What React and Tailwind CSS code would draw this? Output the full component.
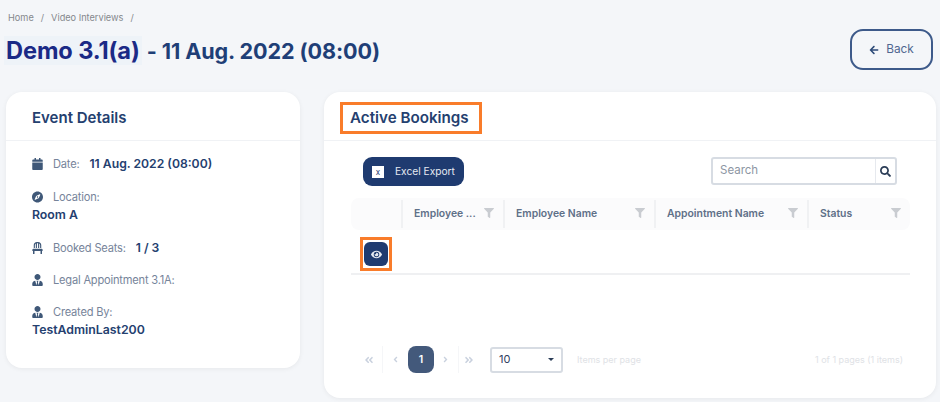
import React from 'react';
import {
    FaAngleDoubleLeft,
    FaAngleDoubleRight,
    FaAngleLeft,
    FaAngleRight,
    FaArrowLeft,
    FaCalendar,
    FaChair,
    FaCompass,
    FaEye,
    FaFilter,
    FaSearch,
    FaUserTie
} from 'react-icons/fa';

const font = { fontFamily: 'Inter, "Liberation Sans", sans-serif' };

const Detail = ({ icon: Icon, label, value, stacked, className = '' }) => (
    <div className={className}>
        <div className="flex items-center h-[20px]">
            <Icon className="w-[11px] h-[12px] text-[#3f5878] shrink-0" />
            <span className="ml-[10px] text-[11.1px] text-[#76849a] tracking-[-0.2px]">{label}</span>
            {value && !stacked && <span className="ml-[10px] text-[12.2px] font-semibold text-[#24406f]">{value}</span>}
        </div>
        {stacked && <div className="text-[12.3px] font-semibold text-[#24406f] leading-[18px] mt-[-1px]">{stacked}</div>}
    </div>
);

const HeaderCell = ({ label, width }) => (
    <div className={`flex items-center justify-between h-[28px] border-l-2 border-[#f0f1f3] pl-[11px] pr-[9px] ${width}`}>
        <span className="text-[10.4px] font-semibold text-[#5f7088] whitespace-nowrap">{label}</span>
        <FaFilter className="w-[10px] h-[10px] text-[#c9ccd1] -mt-[2px]" />
    </div>
);

const App = () => {
    return (
        <div style={font} className="w-[940px] h-[402px] overflow-hidden bg-[#f4f6f9] flex flex-col">
            {/* Breadcrumb + title */}
            <div className="pl-[8px] pt-[11px] text-[9.2px] text-[#85888d] leading-[13px] flex gap-[7px]">
                <span>Home</span><span>/</span><span>Video Interviews</span><span>/</span>
            </div>
            <div className="flex justify-between items-start pl-[4px] pr-[7px] mt-[5px]">
                <h1 className="mt-[6px] text-[21.6px] font-bold leading-[31px] text-[#1f3f77] tracking-[-0.1px] whitespace-nowrap">
                    <span className="bg-[#eef3f8] text-[#1b2a86] text-[23.6px] px-[2px]">Demo 3.1(a)</span> - 11 Aug. 2022 (08:00)
                </h1>
                <button className="w-[83px] h-[41px] rounded-[13px] border-2 border-[#3d5a8a] flex items-center justify-center gap-[7px] text-[11.8px] text-[#4f6690]">
                    <FaArrowLeft className="w-[10px] h-[10px] text-[#2c4a78]" />
                    Back
                </button>
            </div>

            <div className="flex items-start gap-[24px] pl-[6px] pr-[4px] mt-[22px]">
                {/* Event details */}
                <div className="w-[294px] h-[276px] shrink-0 bg-white rounded-[16px] shadow-[0_1px_5px_rgba(0,0,0,0.06)]">
                    <div className="h-[49px] pl-[26px] pt-[4px] flex items-center border-b border-[#f0f2f5] text-[15px] font-semibold text-[#24406f]">
                        Event Details
                    </div>
                    <div className="pl-[26px] pt-[13px]">
                        <Detail icon={FaCalendar} label="Date:" value="11 Aug. 2022 (08:00)" />
                        <Detail icon={FaCompass} label="Location:" stacked="Room A" className="mt-[13px]" />
                        <Detail icon={FaChair} label="Booked Seats:" value="1 / 3" className="mt-[14px]" />
                        <Detail icon={FaUserTie} label="Legal Appointment 3.1A:" className="mt-[12px]" />
                        <Detail icon={FaUserTie} label="Created By:" stacked="TestAdminLast200" className="mt-[12px]" />
                    </div>
                </div>

                {/* Active bookings */}
                <div className="w-[612px] h-[306px] bg-white rounded-[16px] shadow-[0_1px_5px_rgba(0,0,0,0.06)]">
                    <div className="h-[49px] pl-[16px] pt-[10px] border-b border-[#f0f2f5]">
                        <div className="w-[142px] h-[32px] border-[3px] border-[#f97c2a] flex items-center pl-[7px] pt-[1px] text-[15.2px] font-semibold text-[#24406f] whitespace-nowrap">
                            Active Bookings
                        </div>
                    </div>
                    <div className="pl-[27px] pr-[26px]">
                        <div className="flex items-start justify-between pl-[12px] pr-[13px] pt-[16px]">
                            <button className="w-[101px] h-[29px] rounded-[9px] bg-[#1f3b70] flex items-center pl-[9px] text-[10.2px] text-[#e6eaf2]">
                                <span className="w-[12px] h-[12px] bg-white text-[#1f3b70] text-[8px] leading-[12px] text-center">x</span>
                                <span className="ml-[11px]">Excel Export</span>
                            </button>
                            <div className="w-[186px] h-[28px] border-2 border-[#d7dce3] rounded-[3px] flex items-center">
                                <span className="flex-1 pl-[7px] text-[11.5px] text-[#8d96a3]">Search</span>
                                <span className="w-[20px] h-full border-l border-[#e6e9ee] flex items-center justify-center">
                                    <FaSearch className="w-[11px] h-[11px] text-[#2b3d57]" />
                                </span>
                            </div>
                        </div>

                        <div className="mt-[12px] h-[32px] w-[559px] flex items-center bg-[#fbfbfc] rounded-[8px]">
                            <div className="w-[50px]" />
                            <HeaderCell label="Employee ..." width="w-[102px]" />
                            <HeaderCell label="Employee Name" width="w-[151px]" />
                            <HeaderCell label="Appointment Name" width="w-[153px]" />
                            <HeaderCell label="Status" width="w-[103px]" />
                        </div>
                        <div className="h-[45px] w-[559px] border-b-2 border-[#eff0f2] pl-[9px] pt-[7px]">
                            <div className="w-[32px] h-[34px] border-[3px] border-[#f97c2a] flex items-center justify-center">
                                <button className="w-[24px] h-[24px] rounded-[6px] bg-[#1f3b70] flex items-center justify-center">
                                    <FaEye className="w-[11px] h-[11px] text-[#e6eaf2]" />
                                </button>
                            </div>
                        </div>

                        {/* Pager */}
                        <div className="mt-[71px] w-[559px] h-[27px] flex items-center pl-[13px] text-[#c9d1de]">
                            <FaAngleDoubleLeft className="w-[10px] h-[10px]" />
                            <span className="w-px h-[27px] bg-[#f5f6f8] ml-[8px]" />
                            <FaAngleLeft className="w-[9px] h-[9px] ml-[8px]" />
                            <button className="ml-[8px] w-[26px] h-[27px] rounded-[8px] bg-[#43597b] text-white text-[10.5px] font-semibold">1</button>
                            <FaAngleRight className="w-[9px] h-[9px] ml-[7px]" />
                            <span className="w-px h-[27px] bg-[#f5f6f8] ml-[8px]" />
                            <FaAngleDoubleRight className="w-[10px] h-[10px] ml-[5px]" />
                            <div className="ml-[16px] w-[73px] h-[26px] border-2 border-[#d7dce3] rounded-[3px] flex items-center justify-between pl-[7px] pr-[7px] text-[#2f4160] text-[11px]">
                                10
                                <span className="w-0 h-0 border-x-[3px] border-x-transparent border-t-[3px] border-t-[#2b3d57]" />
                            </div>
                            <span className="ml-[14px] text-[9px] text-[#e0e2e6] whitespace-nowrap">Items per page</span>
                            <span className="ml-auto mr-[7px] text-[9px] text-[#e0e2e6] whitespace-nowrap">1 of 1 pages (1 items)</span>
                        </div>
                    </div>
                </div>
            </div>
        </div>
    );
};

export default App;
